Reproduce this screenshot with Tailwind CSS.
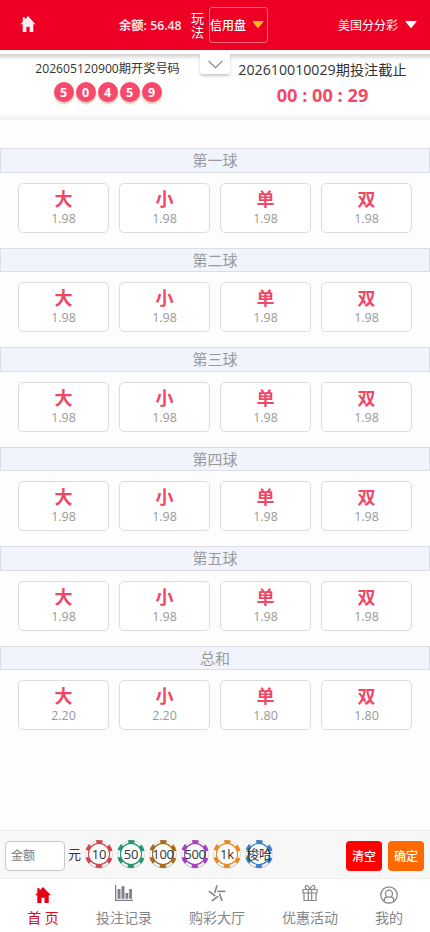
<!DOCTYPE html>
<html lang="zh-CN">
<head>
<meta charset="utf-8">
<meta name="viewport" content="width=device-width, initial-scale=1">
<title>美国分分彩</title>
<script src="https://cdn.jsdelivr.net/npm/@tailwindcss/browser@4"></script>
</head>
<body class="font-['Open_Sans','Noto_Sans_CJK_SC',sans-serif]">
<div class="relative flex h-[932px] w-[430px] flex-col overflow-hidden bg-[#fdfdfd] whitespace-nowrap">

  <header class="flex h-[50px] shrink-0 items-center bg-[#ed0023] text-[12px] leading-[14px] text-white">
    <svg class="mb-[2px] ml-5 h-4 w-4" viewBox="0 0 16 16" fill="#ffeef4"><path d="M8 0 15.500 8.300h-2.200V16H9.600v-5.200H6.400V16H2.700V8.300H.5L2.800 5.800V1.200h2.100v2.300z"/></svg>
    <span class="ml-[83px] w-[65px] pt-px text-[12.300px] font-semibold text-[#ffe9ee]">余额: 56.48</span>
    <span class="ml-[7px] w-[13px] text-[13px] leading-[14px] whitespace-normal">玩法</span>
    <div class="ml-[5px] flex h-9 w-[59px] items-center rounded-[3px] border border-[#f76a7d]">
      <span class="pt-px font-medium">信用盘</span>
      <svg class="mb-[2px] ml-[6px] h-[7px] w-[12px]" viewBox="0 0 12 7"><path d="M1 0h10q1 0 .4.8L6.800 6.500q-.8.8-1.600 0L.6.8Q0 0 1 0z" fill="#fcb524"/></svg>
    </div>
    <span class="ml-[70px] w-[60px] pt-px">美国分分彩</span>
    <svg class="mb-[2px] ml-[7px] h-[7px] w-[12px]" viewBox="0 0 12 7"><path d="M1 0h10q1 0 .4.8L6.800 6.500q-.8.8-1.600 0L.6.8Q0 0 1 0z" fill="#fff"/></svg>
  </header>

  <section class="relative flex h-[70px] shrink-0 bg-white">
    <div class="absolute inset-x-0 top-[4px] h-[6px] bg-linear-to-b from-[#d2d2d2] to-white"></div>
    <div class="absolute inset-x-0 bottom-0 h-[7px] bg-linear-to-b from-white to-[#f0f0f0]"></div>
    <div class="relative flex w-[215px] flex-col items-center pt-[10px]">
      <p class="text-[12.200px] leading-[18px] text-[#333]">202605120900期开奖号码</p>
      <div id="balls" class="mt-[4px] flex gap-[2px]"></div>
    </div>
    <div class="relative flex w-[215px] flex-col items-center pt-[10px]">
      <p class="text-[14.200px] leading-[20px] text-[#333]">202610010029期投注截止</p>
      <p class="mt-[3px] text-[18.200px] leading-[24px] font-bold text-[#ef4b69]">00 : 00 : 29</p>
    </div>
    <div class="absolute top-[4px] left-[200px] flex h-[20px] w-[30px] items-center justify-center rounded-b-[3px] bg-white shadow-[0_2px_3px_rgba(0,0,0,0.22)]">
      <svg class="h-[9px] w-[15px]" viewBox="0 0 15 9" fill="none" stroke="#999" stroke-width="1.400"><path d="M.7.9 7.500 7.700 14.300.9"/></svg>
    </div>
  </section>

  <main id="groups" class="flex-1 pt-[28.400px]"></main>

  <section class="flex h-[49px] shrink-0 items-center border-y border-[#ededed] bg-[#f7f7f7] pt-[2px] pl-[5px]">
    <div class="flex h-[30px] w-[60px] items-center rounded-[4px] border border-[#c8c8c8] bg-white pt-px pl-[5px] text-[12px] text-[#777]">金额</div>
    <span class="mr-[3px] ml-[3px] pb-[2px] text-[13px] text-[#333]">元</span>
    <div id="chips" class="flex gap-[2px] pb-[3px]"></div>
    <div class="ml-auto flex gap-[6px] pr-[6px] text-[12px] font-medium text-white">
      <button class="h-[30px] w-[36px] rounded-[4px] bg-[#fe0000] pt-[2px]">清空</button>
      <button class="h-[30px] w-[36px] rounded-[4px] bg-[#ff6900] pt-[2px]">确定</button>
    </div>
  </section>

  <nav class="flex h-[53px] shrink-0 bg-white pl-[4px] text-[14px] leading-[20px] text-[#85868a]">
    <a class="flex w-[78px] flex-col items-center pt-[7px] text-[#d90a1c]">
      <svg class="h-[18px] w-[18px]" viewBox="0 0 18 18" fill="#e60012"><path d="M9 1 17 9.300h-2.300V17h-4.200v-5.200h-3V17H3.300V9.300H1L3.300 7V2.300h2.400v2.200z"/></svg>
      <span class="mt-[4px]">首 页</span>
    </a>
    <a class="flex w-[84px] flex-col items-center pt-[5px]">
      <svg class="h-[18px] w-[20px]" viewBox="0 0 20 18" fill="#7f8089"><path d="M1 1h1.300v14.700H19V17H1zM3.500 5h3v9.700h-3zM7.500 2.200h3v12.500h-3zM11.500 9h2.800v5.700h-2.800zM15.200 5h2.800v9.700h-2.800z"/></svg>
      <span class="mt-[6px]">投注记录</span>
    </a>
    <a class="flex w-[102px] flex-col items-center pt-[6px]">
      <svg class="h-[18px] w-[18px]" viewBox="-9 -9 18 18" stroke="#85868a" stroke-width="1.600">
        <path d="M.2-2.600h8.100"/><path d="M.2-2.600h8.100" transform="rotate(72)"/><path d="M.2-2.600h8.100" transform="rotate(144)"/><path d="M.2-2.600h8.100" transform="rotate(216)"/><path d="M.2-2.600h8.100" transform="rotate(288)"/>
      </svg>
      <span class="mt-[5px]">购彩大厅</span>
    </a>
    <a class="flex w-[84px] flex-col items-center pt-[5px]">
      <svg class="h-[18px] w-[18px]" viewBox="0 0 18 18" fill="none" stroke="#85868a" stroke-width="1.200"><path d="M2 5.500h14v3.500H2zM3 9v7.500h12V9M7.300 5.500v11M10.700 5.500v11M9 5C7.800 2.500 6.300 1.200 5.200 1.600 3.600 2.200 4 4.300 5.500 5.300M9 5c1.200-2.500 2.700-3.800 3.800-3.400 1.600.6 1.200 2.700-.3 3.700"/></svg>
      <span class="mt-[6px]">优惠活动</span>
    </a>
    <a class="flex w-[74px] flex-col items-center pt-[7px]">
      <svg class="h-[18px] w-[18px]" viewBox="0 0 18 18" fill="none" stroke="#85868a" stroke-width="1.300"><circle cx="9" cy="9" r="8.200"/><circle cx="9" cy="7.700" r="3.500"/><path d="M4 15.200c.1-2.700 1.300-4 3-4.500M14 15.200c-.1-2.700-1.300-4-3-4.500"/></svg>
      <span class="mt-[4px]">我的</span>
    </a>
  </nav>
</div>

<script>
document.getElementById('balls').innerHTML = [5, 0, 4, 5, 9].map(n =>
  `<span class="h-5 w-5 rounded-full bg-[#f8496c] text-center text-[12.500px] leading-[21px] font-bold text-white shadow-[0_2px_2px_#d5c0aa]">${n}</span>`).join('');

document.getElementById('groups').innerHTML = [
  ['第一球', '1.98', '1.98'], ['第二球', '1.98', '1.98'], ['第三球', '1.98', '1.98'],
  ['第四球', '1.98', '1.98'], ['第五球', '1.98', '1.98'], ['总和', '2.20', '1.80']
].map(([title, a, b]) => `
  <section class="h-[99.450px]">
    <h2 class="h-[24.450px] border border-[#dcdee4] bg-[#f1f4fd] text-center text-[15px] leading-[23px] text-[#999]">${title}</h2>
    <div class="grid grid-cols-4 gap-[10px] px-[18px] pt-[10.050px]">
      ${['大', '小', '单', '双'].map((c, i) => `
        <button class="flex h-[50px] flex-col items-center rounded-[5px] border border-[#dcdcdf] bg-white pt-[5px]">
          <span class="text-[18px] leading-[20px] font-bold text-[#ee4867]">${c}</span>
          <span class="text-[12.500px] leading-[19px] text-[#999]">${i < 2 ? a : b}</span>
        </button>`).join('')}
    </div>
  </section>`).join('');

document.getElementById('chips').innerHTML = [
  ['10', '#cf4a4f'], ['50', '#259673'], ['100', '#a86a1c'], ['500', '#a63fc0'], ['1k', '#ea8a24'], ['梭哈', '#3b7fcb']
].map(([t, c]) => `
  <div class="relative flex h-[30px] w-[30px] items-center justify-center">
    <svg class="absolute inset-0 h-[30px] w-[30px]" viewBox="0 0 30 30" fill="none">
      <circle cx="15" cy="16" r="13.400" fill="#c6c6c6"/>
      <circle cx="15" cy="15" r="13.300" fill="#fff" stroke="#d4d4d4" stroke-width=".6"/>
      <circle cx="15" cy="15" r="12.200" stroke="${c}" stroke-width="3.600" stroke-dasharray="6 6.776" stroke-dashoffset="3" transform="rotate(30 15 15)"/>
      <circle cx="15" cy="15" r="10.600" stroke="${c}" stroke-width="1.100"/>
    </svg>
    <span class="relative pt-px text-[13px] leading-none tracking-[-0.2px] text-[#333]">${t}</span>
  </div>`).join('');
</script>
</body>
</html>
